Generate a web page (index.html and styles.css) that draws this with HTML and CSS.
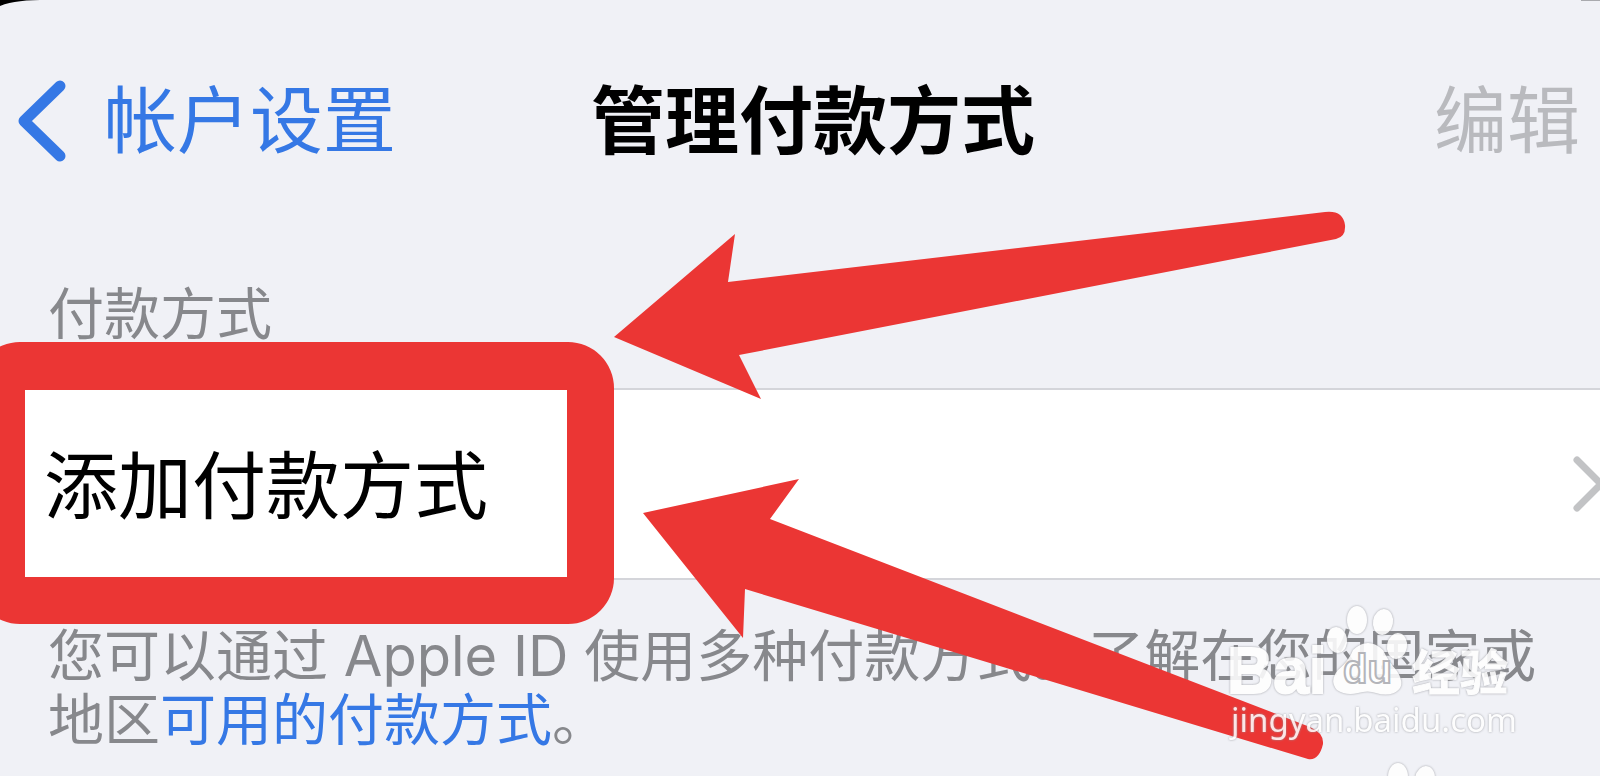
FILE: index.html
```html
<!DOCTYPE html>
<html lang="zh-CN">
<head>
  <meta charset="UTF-8">
  <meta name="viewport" content="width=device-width, initial-scale=1.0">
  <title>管理付款方式</title>
  <link rel="stylesheet" href="styles.css">
</head>
<body>
  <div class="screen">
    <header class="navbar">
      <a class="back" href="#">
        <svg class="back-icon" viewBox="0 0 48 82" aria-hidden="true">
          <path d="M42 6 L6 41 L42 76"/>
        </svg>
        <span>帐户设置</span>
      </a>
      <h1>管理付款方式</h1>
      <button class="edit" type="button" disabled>编辑</button>
    </header>

    <main>
      <h2 class="section-title">付款方式</h2>
      <a class="row" href="#">
        <span class="row-label">添加付款方式</span>
        <svg class="chevron" viewBox="0 0 27 56" aria-hidden="true">
          <path d="M4 4 L28 28 L4 52"/>
        </svg>
      </a>
      <p class="note">您可以通过 Apple ID 使用多种付款方式。了解在您的国家或地区<a href="#">可用的付款方式</a>。</p>
    </main>

    <!-- highlight box, arrows and watermark -->
    <svg class="overlay" viewBox="0 0 1600 776" aria-hidden="true">
      <path d="M0 0 H48 C26 0 12 1 0 6 Z"/>
      <path class="edge" d="M1581 0 H1600 V1 H1581 Z"/>
      <path class="mark" fill-rule="evenodd" d="M20 342 H568 A46 46 0 0 1 614 388 V578 A46 46 0 0 1 568 624 H20 A46 46 0 0 1 -26 578 V388 A46 46 0 0 1 20 342 Z M25 390 V577 H567 V390 Z"/>
      <path class="mark" d="M614 337 L735 234 L728 282 L1325 212 Q1343 210 1345 225 Q1346 237 1336 239 L739 355 L761 399 Z"/>
      <path class="mark" d="M643 513 L799 479 L770 519 L1310 727 Q1324 733 1323 744 Q1319 761 1308 759 L745 589 L743 638 Z"/>
      <g class="watermark">
        <text class="brand" x="1227" y="693">Bai</text>
        <ellipse cx="1357" cy="620" rx="10" ry="14"/>
        <ellipse cx="1383" cy="622" rx="10" ry="13" transform="rotate(10 1383 622)"/>
        <ellipse cx="1337" cy="640" rx="10" ry="13" transform="rotate(-10 1337 640)"/>
        <ellipse cx="1397" cy="646" rx="10" ry="13" transform="rotate(10 1397 646)"/>
        <path d="M1353 650 Q1368 636 1383 650 Q1388 661 1397 671 Q1407 687 1394 693 Q1386 696 1376 693 Q1368 690 1358 693 Q1346 696 1337 690 Q1329 681 1338 670 Q1349 661 1353 650 Z"/>
        <text class="brand-cn" x="1412" y="690">经验</text>
        <text class="url" x="1231" y="732">jingyan.baidu.com</text>
        <ellipse cx="1398" cy="777" rx="10" ry="14"/>
        <ellipse cx="1425" cy="779" rx="10" ry="13" transform="rotate(10 1425 779)"/>
      </g>
      <text class="du" x="1343" y="683">du</text>
    </svg>
  </div>
</body>
</html>
```

FILE: styles.css
```css
* {
  box-sizing: border-box;
}
body {
  margin: 0;
  background: #f0f1f6;
  color: #000;
  font-family: Inter, "Noto Sans CJK SC", sans-serif;
}
a {
  color: #3578e5;
  text-decoration: none;
}
.screen {
  position: relative;
  min-height: 100vh;
  overflow: hidden;
}
.navbar {
  display: grid;
  grid-template-columns: 1fr auto 1fr;
  align-items: center;
  padding: 65px 20px 0 18px;
  font-size: 73px;
  line-height: 112px;
}
.back {
  display: flex;
  align-items: center;
  gap: 38px;
}
.back-icon {
  width: 48px;
  height: 82px;
}
.back-icon path {
  fill: none;
  stroke: #3578e5;
  stroke-width: 11;
  stroke-linecap: round;
  stroke-linejoin: round;
}
h1 {
  margin: 0;
  padding-left: 28px;
  font-size: 74px;
  font-weight: 700;
}
.edit {
  justify-self: end;
  padding: 0;
  border: none;
  background: none;
  color: #b9babe;
  font: inherit;
}
.section-title {
  margin: 97px 0 0;
  padding: 0 48px;
  color: #87888c;
  font-size: 56px;
  font-weight: 400;
  line-height: 80px;
}
.row {
  display: flex;
  align-items: center;
  justify-content: space-between;
  margin-top: 34px;
  padding-left: 44px;
  height: 192px;
  border-top: 2px solid #d4d5da;
  border-bottom: 2px solid #d4d5da;
  background: #fff;
  color: #000;
  font-size: 74px;
}
.row-label {
  padding-bottom: 8px;
}
.chevron {
  width: 27px;
  height: 56px;
}
.chevron path {
  fill: none;
  stroke: #c2c3c5;
  stroke-width: 7;
  stroke-linecap: round;
}
.note {
  margin: 44px 0 0;
  padding: 0 48px;
  color: #87888c;
  font-size: 56px;
  line-height: 64px;
}
.overlay {
  position: absolute;
  top: 0;
  left: 0;
  width: 100%;
  pointer-events: none;
}
.edge {
  fill: #a9aaae;
}
.mark {
  fill: #eb3634;
}
.watermark {
  fill: #fff;
  opacity: 0.88;
  filter: drop-shadow(0 0 1px #96979c);
}
.brand {
  stroke: #fff;
  stroke-width: 2;
  font: 700 64px "Liberation Sans", sans-serif;
}
.brand-cn {
  stroke: #fff;
  stroke-width: 1;
  font: 700 48px "Noto Sans CJK SC", sans-serif;
}
.url {
  font: 400 33px "Noto Sans", sans-serif;
}
.du {
  fill: #fff;
  stroke: #b4b5ba;
  stroke-width: 2;
  font: 700 40px "Liberation Sans", sans-serif;
}
```
